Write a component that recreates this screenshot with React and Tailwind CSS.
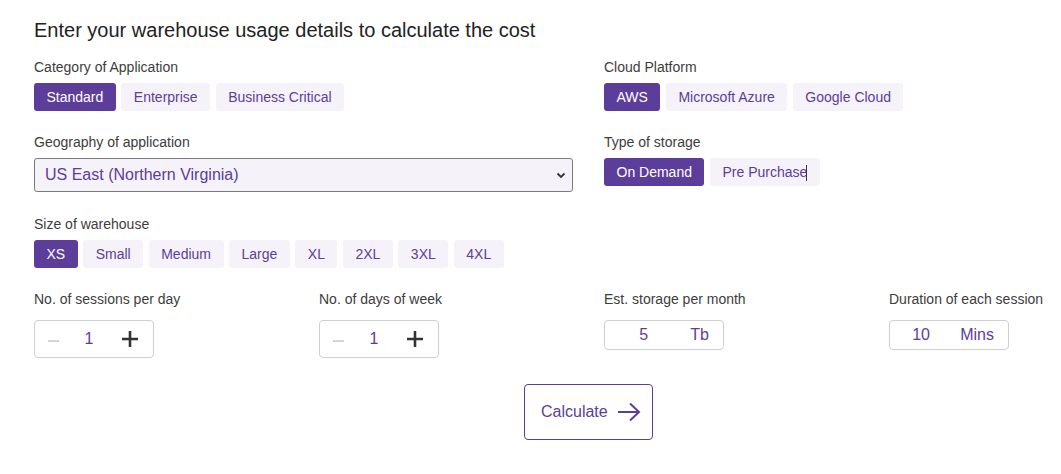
import { useState } from 'react'

const PURPLE = 'bg-[#5c3d9a]'

function Pills({ items, active, onPick }) {
  return (
    <div className="flex gap-[5.5px]">
      {items.map((it) => (
        <button
          key={it}
          onClick={() => onPick(it)}
          className={`h-[28px] px-[12.5px] rounded-[3px] text-[14px] leading-none ${
            it === active ? `${PURPLE} text-white` : 'bg-[#f5f3f9] text-[#5c3d9a]'
          }`}
        >
          {it}
        </button>
      ))}
    </div>
  )
}

function Label({ children, className = '' }) {
  return <div className={`text-[14px] leading-[20px] text-[#3d3d3d] ${className}`}>{children}</div>
}

function Counter({ value, setValue }) {
  return (
    <div className="flex items-center w-[120px] h-[38px] border border-[#cfcfcf] rounded-[4px]">
      <button onClick={() => setValue(Math.max(1, value - 1))} className="w-[36px] flex justify-center pt-[4px]">
        <span className="block w-[11px] h-[2px] bg-[#d4d4d4]" />
      </button>
      <span className="w-[36px] text-center text-[16px] text-[#5c3d9a]">{value}</span>
      <button onClick={() => setValue(value + 1)} className="w-[46px] flex justify-center">
        <svg width="18" height="18" viewBox="0 0 18 18">
          <path d="M9 1v16M1 9h16" stroke="#333" strokeWidth="2.6" />
        </svg>
      </button>
    </div>
  )
}

function UnitBox({ value, unit }) {
  return (
    <div className="flex items-center gap-[8px] w-[120px] h-[30px] pr-[14px] border border-[#cfcfcf] rounded-[4px] text-[16px] text-[#5c3d9a]">
      <span className="flex-1 text-center">{value}</span>
      <span>{unit}</span>
    </div>
  )
}

export default function App() {
  const [category, setCategory] = useState('Standard')
  const [cloud, setCloud] = useState('AWS')
  const [storage, setStorage] = useState('On Demand')
  const [size, setSize] = useState('XS')
  const [sessions, setSessions] = useState(1)
  const [days, setDays] = useState(1)

  return (
    <div className="w-[1061px] h-[474px] overflow-hidden bg-white font-['Liberation_Sans',Arial,sans-serif]">
      <div className="pl-[34px] pt-[18px]">
        <h1 className="text-[20px] leading-[24px] text-[#222]">
          Enter your warehouse usage details to calculate the cost
        </h1>

        <div className="grid grid-cols-[570px_570px] mt-[15px]">
          <div>
            <Label className="mb-[6px]">Category of Application</Label>
            <Pills items={['Standard', 'Enterprise', 'Business Critical']} active={category} onPick={setCategory} />
          </div>
          <div>
            <Label className="mb-[6px]">Cloud Platform</Label>
            <Pills items={['AWS', 'Microsoft Azure', 'Google Cloud']} active={cloud} onPick={setCloud} />
          </div>

          <div className="mt-[21px] pr-[31px]">
            <Label className="mb-[6px]">Geography of application</Label>
            <div className="relative">
              <select className="appearance-none w-full h-[34px] pl-[10px] rounded-[3px] border border-[#7a7a7a] bg-[#f5f3f9] text-[16px] text-[#5c3d9a] outline-none">
                <option>US East (Northern Virginia)</option>
              </select>
              <svg className="absolute right-[7px] top-[14px] pointer-events-none" width="10" height="7" viewBox="0 0 10 7">
                <path d="M1.5 1.5l3.5 3.5 3.5-3.5" fill="none" stroke="#333" strokeWidth="1.8" />
              </svg>
            </div>
          </div>
          <div className="mt-[21px]">
            <Label className="mb-[6px]">Type of storage</Label>
            <div className="relative inline-block">
              <Pills items={['On Demand', 'Pre Purchase']} active={storage} onPick={setStorage} />
              <span className="absolute right-[13px] top-[7px] w-px h-[16px] bg-[#333]" />
            </div>
          </div>
        </div>

        <div className="mt-[22px]">
          <Label className="mb-[6px]">Size of warehouse</Label>
          <Pills items={['XS', 'Small', 'Medium', 'Large', 'XL', '2XL', '3XL', '4XL']} active={size} onPick={setSize} />
        </div>

        <div className="grid grid-cols-[285px_285px_285px_285px] mt-[21px]">
          <div>
            <Label className="mb-[11px]">No. of sessions per day</Label>
            <Counter value={sessions} setValue={setSessions} />
          </div>
          <div>
            <Label className="mb-[11px]">No. of days of week</Label>
            <Counter value={days} setValue={setDays} />
          </div>
          <div>
            <Label className="mb-[11px]">Est. storage per month</Label>
            <UnitBox value={5} unit="Tb" />
          </div>
          <div>
            <Label className="mb-[11px]">Duration of each session</Label>
            <UnitBox value={10} unit="Mins" />
          </div>
        </div>

        <div className="flex mt-[26px] pl-[490px]">
          <button className="flex items-center gap-[9px] w-[129px] h-[56px] pl-[16px] border border-[#5c3d9a] rounded-[4px] text-[16px] text-[#5c3d9a]">
            Calculate
            <svg width="24" height="20" viewBox="0 0 24 20">
              <path d="M1 10h21M13 1.5l9 8.5-9 8.5" fill="none" stroke="#5c3d9a" strokeWidth="2" />
            </svg>
          </button>
        </div>
      </div>
    </div>
  )
}
